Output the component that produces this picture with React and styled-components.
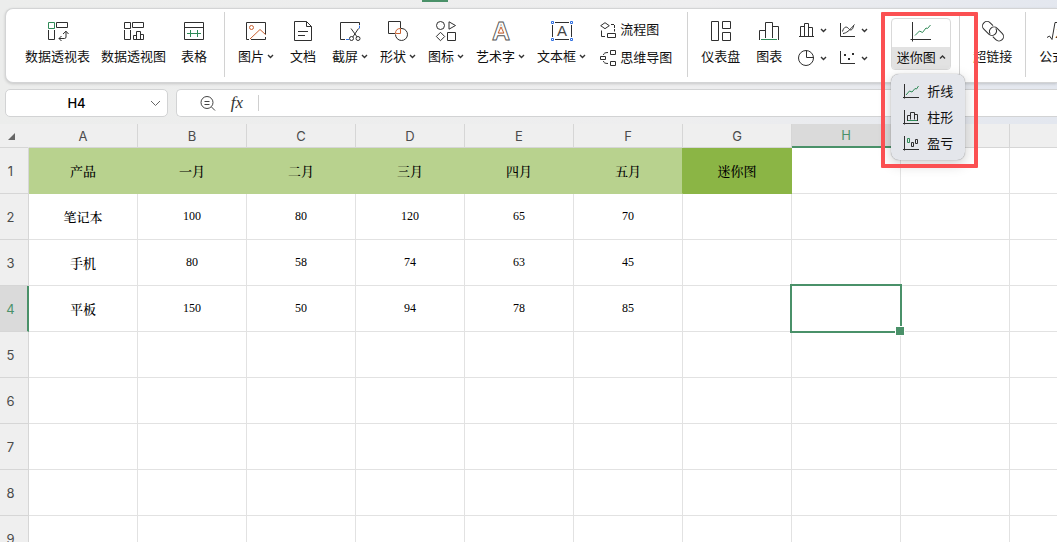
import React from "react";
import styled, { createGlobalStyle, css } from "styled-components";

const INK = "#2f2f2f";
const GREEN = "#4a9169";
const ICON_GREEN = "#2f8a57";
const ORANGE = "#c9602f";
const BLUE = "#2f6fe0";

const GlobalStyle = createGlobalStyle`
  * { box-sizing: border-box; }
  body {
    margin: 0;
    font-family: Inter, "Noto Sans CJK SC", sans-serif;
    font-size: 13px;
    color: #111;
    background: #eeefef;
  }
  button, input { font: inherit; color: inherit; }
`;

const Page = styled.div`
  display: flex;
  flex-direction: column;
  height: 100vh;
  overflow: hidden;
  background: linear-gradient(100deg, #ecedec 0%, #eeeeef 65%, #e3e7ef 100%) top / 100% 124px no-repeat, #efefef;
`;

const TabStrip = styled.div`
  height: 8px;
  flex: none;
  padding-left: 422px;
`;

const ActiveTab = styled.div`
  width: 26px;
  height: 2px;
  background: ${GREEN};
`;

const Ribbon = styled.header`
  position: relative;
  z-index: 2;
  display: flex;
  flex: none;
  margin-left: 5px;
  padding: 3px 0 5px 6px;
  background: #fff;
  border: 1px solid #d3d4d5;
  border-right: 0;
  border-radius: 8px 0 0 8px;
  box-shadow: 0 1px 3px rgba(0, 0, 0, 0.16);
`;

const Group = styled.div`
  display: flex;
  flex: none;
  align-items: flex-start;
  gap: ${(p) => p.$gap || 12}px;
  padding: 6px 13px 0;
  height: 65px;

  & + & { border-left: 1px solid #d2d2d2; }
`;

const Tool = styled.button`
  display: flex;
  flex-direction: column;
  align-items: center;
  gap: 6px;
  min-width: 34px;
  padding: 3px 0 0;
  border: 0;
  background: none;
`;

const Label = styled.span`
  display: flex;
  align-items: center;
  gap: 3px;
  height: 18px;
  line-height: 18px;
  white-space: nowrap;
  font-family: "Noto Sans CJK SC", sans-serif;
`;

const Stack = styled.div`
  display: flex;
  flex-direction: column;
  gap: 8px;
  padding: 2px ${(p) => p.$inset || 0}px 0;
`;

const InlineTool = styled.button`
  display: flex;
  align-items: center;
  gap: ${(p) => p.$gap || 4}px;
  height: 20px;
  padding: 0;
  border: 0;
  background: none;

  ${Label} {
    height: 20px;
    padding-bottom: 2px;
  }
`;

const SparkWrap = styled.div`
  position: relative;
  margin: 0 -5px 0 11px;
`;

const SparkButton = styled.button`
  display: flex;
  flex-direction: column;
  align-items: center;
  gap: 6px;
  width: 60px;
  padding: 2px 0 0;
  border: 1px solid #d9d9d9;
  border-radius: 4px;
  background: #fff;
  overflow: hidden;

  ${Label} {
    align-self: stretch;
    justify-content: center;
    height: 22px;
    padding-bottom: 3px;
    background: #e2e2e2;
  }
`;

const Menu = styled.div`
  position: absolute;
  z-index: 1;
  top: 56px;
  left: 0;
  width: 74px;
  padding: 4px 0;
  border-radius: 8px;
  background: #e4e6eb;
  box-shadow: 0 0 1px rgba(0, 0, 0, 0.5), 0 4px 14px rgba(0, 0, 0, 0.2);
`;

const MenuItem = styled.button`
  display: flex;
  align-items: center;
  gap: 8px;
  width: 100%;
  height: 26px;
  padding: 0 0 0 12px;
  border: 0;
  background: none;
`;

const Highlight = styled.div`
  position: absolute;
  z-index: 2;
  top: -6px;
  left: -10px;
  width: 97px;
  height: 156px;
  border: 4px solid #fb5052;
  border-radius: 1px;
  pointer-events: none;
`;

const FormulaRow = styled.div`
  display: flex;
  flex: none;
  gap: 8px;
  padding: 6px 0 7px 5px;
`;

const Field = styled.div`
  display: flex;
  align-items: center;
  height: 28px;
  border: 1px solid #d2d3d4;
  background: #fff;
`;

const NameBox = styled(Field)`
  width: 163px;
  border-radius: 5px;

  input {
    width: 141px;
    padding: 0;
    border: 0;
    background: none;
    text-align: center;
    font-weight: 500;
    color: #000;
  }
`;

const FormulaBar = styled(Field)`
  flex: 1;
  gap: 14px;
  padding-left: 23px;
  border-right: 0;
  border-radius: 5px 0 0 5px;

  input {
    flex: 1;
    height: 16px;
    padding: 0 8px;
    border: 0;
    border-left: 1px solid #cfcfcf;
    background: none;
  }
`;

const IconButton = styled.button`
  display: flex;
  padding: 0;
  border: 0;
  background: none;
`;

const FxButton = styled(IconButton)`
  width: 14px;
  justify-content: center;
  font: italic 17px/20px "Liberation Serif", serif;
  color: #333;
`;

const SheetArea = styled.main`
  flex: 1;
  min-height: 0;
  overflow: hidden;
  background: #fff;
`;

const Sheet = styled.table`
  table-layout: fixed;
  width: 1119px;
  border-collapse: separate;
  border-spacing: 0;

  th, td { padding: 0; text-align: center; font-weight: 400; }
`;

const Corner = styled.th`
  width: 29px;
  height: 24px;
  background: #efefef;
  border-right: 1px solid #efefef;
  border-bottom: 1px solid #d6d6d6;
`;

const SelectAll = styled(IconButton)`
  padding: 2px 0 0 8px;
`;

const headerActive = css`
  background: #dadada;
  color: ${GREEN};
`;

const ColHead = styled.th`
  width: 109px;
  color: #4b4b4b;
  background: #efefef;
  border-right: 1px solid #d6d6d6;
  border-bottom: 1px solid #d6d6d6;
  ${(p) => p.$active && headerActive}
  ${(p) => p.$active && `border-bottom: 2px solid ${GREEN};`}
`;

const RowHead = styled.th`
  height: 46px;
  color: #4b4b4b;
  background: #efefef;
  border-right: 1px solid #d6d6d6;
  border-bottom: 1px solid #d6d6d6;

  span { display: block; width: 21px; }
  ${(p) => p.$active && headerActive}
  ${(p) => p.$active && `border-right: 2px solid ${GREEN};`}
`;

const fills = { light: "#b8d28e", dark: "#8bb545" };

const Cell = styled.td`
  position: relative;
  color: #000;
  font-family: "Liberation Serif", "Noto Serif CJK SC", "Noto Sans CJK SC", serif;
  font-size: ${(p) => (p.$numeric ? 12 : 13)}px;
  background: ${(p) => fills[p.$fill] || "#fff"};
  border-right: 1px solid ${(p) => fills[p.$edge] || fills[p.$fill] || "#e2e2e2"};
  border-bottom: 1px solid ${(p) => fills[p.$fill] || "#e2e2e2"};
  && { font-weight: 500; }
`;

const Selection = styled.div`
  position: absolute;
  z-index: 1;
  inset: -2px;
  border: 2px solid ${GREEN};

  &::after {
    content: "";
    position: absolute;
    right: -5px;
    bottom: -5px;
    width: 8px;
    height: 8px;
    border: 1px solid #fff;
    background: ${GREEN};
  }
`;

function Svg({ w = 20, h = 20, children }) {
  return (
    <svg width={w} height={h} viewBox={`0 0 ${w} ${h}`} fill="none" stroke={INK} overflow="visible" aria-hidden="true">
      {children}
    </svg>
  );
}

const Caret = ({ up }) => (
  <svg width="7" height="6" viewBox="0 0 7 6" fill="none" stroke="#333" strokeWidth="1.4" aria-hidden="true">
    <path d={up ? "M1 4.5 3.5 2 6 4.5" : "M1 2 3.5 4.5 6 2"} />
  </svg>
);

const PivotTableIcon = () => (
  <Svg>
    <path stroke={ICON_GREEN} d="M.5 1.5h6v6h-6z" />
    <path d="M8.5 1.5h11v5h-11zM.5 9V18.5h6V9M11 17.500h5.500q1.500 0 1.500-1.500v-5.500M13.500 15 11 17.500l2.500 2.500M15 13l3-2.800L20.500 13" />
  </Svg>
);
const PivotChartIcon = () => (
  <Svg>
    <path d="M.5 1.500h6v6h-6zM8.500 1.500h11v5h-11zM.5 9V18.500h6V9M9.500 18.500v-4h3v-4h4v3h3v5zM12.500 14v4.500M16.500 13v5.500" />
  </Svg>
);
const TableIcon = () => (
  <Svg>
    <path d="M.5 1.500h19v17h-19zM.5 6.500h19" />
    <path stroke={ICON_GREEN} d="M3 12.500h14M6.500 9v7M13.500 9v7" />
  </Svg>
);
const PictureIcon = () => (
  <Svg>
    <path d="M3 18.500H.5v-17h19v12M5 18.500h14.500v-2.500" />
    <circle cx="5.500" cy="6.500" r="2" stroke={ORANGE} />
    <path stroke={ORANGE} d="m4 18 10-9.500 5.500 5" />
  </Svg>
);
const DocumentIcon = () => (
  <Svg>
    <path d="M1.500.5h12l5 5v14h-17zM13.500.5v5h5M5 10.500h10M5 14.500h7" />
  </Svg>
);
const ScreenshotIcon = () => (
  <Svg>
    <path d="M5 18.500H.5v-17h19V4M11 7.500l6.200 8.500M18.500 7.500 12.800 16" />
    <circle cx="11.500" cy="17.500" r="2" />
    <circle cx="18" cy="17.500" r="2" />
    <path stroke={BLUE} d="M19.500 4.500v3M6 18.500h3" />
  </Svg>
);
const ShapesIcon = () => (
  <Svg w={21}>
    <path d="M7 12.500H.5V.5h12V7" />
    <path d="M12.500 7.500h1.500a6 6 0 1 1-6.500 6" />
    <path stroke={ORANGE} d="M12.500 7.500v5h-5q0-5 5-5z" />
  </Svg>
);
const IconsIcon = () => (
  <Svg>
    <circle cx="4.500" cy="4.500" r="4" />
    <path d="m13 .8 6.500 3.700-6.500 3.700zM4.500 11.300l4.200 4.200-4.200 4.200-4.200-4.200zM11.500 11.500h8v8h-8z" />
  </Svg>
);
const WordArtIcon = () => (
  <Svg>
    <text x="10" y="18.500" textAnchor="middle" fontFamily="Liberation Sans" fontWeight="700" fontSize="25" stroke="#555" strokeWidth="0.9">A</text>
    <path fill="#fff" stroke="#fff" strokeWidth="2" d="m10 6 2.300 5.500H7.700z" />
    <path stroke={ORANGE} d="m10 6 2.800 6H7.200z" />
  </Svg>
);
const TextBoxIcon = () => (
  <Svg w={22}>
    <path d="M4 1.500h14M4 18.500h14M1.500 4v12M20.500 4v12" />
    <path stroke={BLUE} d="M.5.5h2v2h-2zM19.500.5h2v2h-2zM.5 17.500h2v2h-2zM19.500 17.500h2v2h-2z" />
    <text x="11" y="15" textAnchor="middle" fontFamily="Liberation Sans" fontSize="15" fill="#444" stroke="none">A</text>
  </Svg>
);
const FlowIcon = () => (
  <Svg w={16} h={16}>
    <path d="m5 .7 4.300 3L5 6.700l-4.300-3zM1.500 8.500v6H5M7.500 11.500h8v4h-8z" />
    <path strokeDasharray="3 1" d="M11 2.500h3.500v7" />
  </Svg>
);
const MindMapIcon = () => (
  <Svg w={16} h={16}>
    <path d="M.5 6.500h5v3h-5zM10.500.5h5v4h-5zM10.500 11.500h5v4h-5zM3.500 5q0-2.500 4.500-2.500M3.500 11q0 2.500 4.500 2.500" />
  </Svg>
);
const DashboardIcon = () => (
  <Svg>
    <path d="M.5.5h7v19h-7zM11.500.5h8v7h-8zM11.500 11.500h8v8h-8z" />
  </Svg>
);
const ChartIcon = () => (
  <Svg>
    <path d="M.5 19V9.500h6M6.500 17V1.500h7V17M13.500 5.500h6V19" />
    <path stroke={ICON_GREEN} d="M2 18.500h16" />
  </Svg>
);
const BarIcon = () => (
  <Svg w={16} h={16}>
    <path d="M1 14.500h15M2.500 14.500v-10h4M6.500 14.500v-13h4v13M10.500 5.500h4v9" />
  </Svg>
);
const PieIcon = () => (
  <Svg w={16} h={16}>
    <circle cx="8" cy="8" r="7.500" />
    <path d="M8.500.5v7h7" />
  </Svg>
);
const LineIcon = () => (
  <Svg w={16} h={16}>
    <path d="M1.500 1v13.500H16M4 11.500C7.500 11 10 9 15.500 2.500M3.500 9.500C5 4 8 4.500 9.500 6.500S13.500 9 14.500 4" />
  </Svg>
);
const ScatterIcon = () => (
  <Svg w={16} h={16}>
    <path d="M1.500 1v12.500H16" />
    <path fill={INK} stroke="none" d="M5 4h2v2H5zM13 3h2v2h-2zM9 8h2v2H9z" />
  </Svg>
);
const SparklineIcon = () => (
  <Svg>
    <path d="M1.500 1v19.500M-.5 18.500H20" />
    <path stroke={ICON_GREEN} d="m4 14.500 4.500-4.500 3 1.500L15 7l1.500.500L19.500 4" />
  </Svg>
);
const LineItemIcon = () => (
  <Svg w={16} h={16}>
    <path d="M1.500 1v14.500M0 14.500h16" />
    <path stroke={ICON_GREEN} d="m3 12 3.500-4L9 9l3-3.500 1.500.500L15.500 3" />
  </Svg>
);
const ColumnItemIcon = () => (
  <Svg w={16} h={16}>
    <path d="M1.500 1v14.500M0 14.500h16M4.500 12V6.500h3M7.500 10.500v-7h4v7M11.500 5.500h3V12" />
    <path stroke={ICON_GREEN} d="M5 11.500h9" />
  </Svg>
);
const WinLossItemIcon = () => (
  <Svg w={16} h={16}>
    <path d="M1.500 1v14.500M0 14.500h16M8.500 7.500h2v4h-2zM12.500 4.500h2v4h-2z" />
    <path stroke={ICON_GREEN} d="M4.500 3.500h2v4h-2z" />
  </Svg>
);
const LinkIcon = () => (
  <Svg w={22}>
    <rect x="-8" y="-4.500" width="16" height="9" rx="4.500" strokeDasharray="34 4" strokeDashoffset="-8" transform="translate(7.500 7.500) rotate(45)" />
    <rect x="-8" y="-4.500" width="16" height="9" rx="4.500" strokeDasharray="34 4" strokeDashoffset="-29" transform="translate(14.500 13) rotate(45)" />
  </Svg>
);
const FormulaIcon = () => (
  <Svg>
    <path d="M0 16.500 2.500 15 5 18.500 8 1.500h12" />
    <text x="9" y="17" fontFamily="Liberation Serif" fontStyle="italic" fontSize="18" fill={INK} stroke="none">x</text>
  </Svg>
);
const SearchIcon = () => (
  <Svg w={16} h={16}>
    <g stroke="#444">
      <circle cx="7" cy="7.500" r="6" />
      <path d="M4.500 6.500h5M4.500 9.500h5M11.500 12l3.500 3.500" />
    </g>
  </Svg>
);

function RibbonTool({ icon: Icon, label, menu }) {
  return (
    <Tool type="button">
      <Icon />
      <Label>{label}{menu && <Caret />}</Label>
    </Tool>
  );
}

function RowTool({ icon: Icon, label, name }) {
  return (
    <InlineTool type="button" aria-label={name} $gap={label ? 4 : 6}>
      <Icon />
      {label ? <Label>{label}</Label> : <Caret />}
    </InlineTool>
  );
}

function SparklineMenu() {
  return (
    <SparkWrap>
      <SparkButton type="button" aria-expanded="true">
        <SparklineIcon />
        <Label>迷你图<Caret up /></Label>
      </SparkButton>
      <Menu role="menu">
        <MenuItem role="menuitem"><LineItemIcon /><Label>折线</Label></MenuItem>
        <MenuItem role="menuitem"><ColumnItemIcon /><Label>柱形</Label></MenuItem>
        <MenuItem role="menuitem"><WinLossItemIcon /><Label>盈亏</Label></MenuItem>
      </Menu>
      <Highlight />
    </SparkWrap>
  );
}

const columns = ["A", "B", "C", "D", "E", "F", "G", "H", "I", "J"];
const data = [
  ["产品", "一月", "二月", "三月", "四月", "五月", "迷你图"],
  ["笔记本", 100, 80, 120, 65, 70],
  ["手机", 80, 58, 74, 63, 45],
  ["平板", 150, 50, 94, 78, 85],
];
const rows = [0, 1, 2, 3, 4, 5, 6, 7, 8];

function fillOf(r, c) {
  if (r !== 0 || c > 6) return undefined;
  return c === 6 ? "dark" : "light";
}

export default function App() {
  return (
    <Page>
      <GlobalStyle />
      <TabStrip><ActiveTab /></TabStrip>
      <Ribbon>
        <Group $gap={11}>
          <RibbonTool icon={PivotTableIcon} label="数据透视表" />
          <RibbonTool icon={PivotChartIcon} label="数据透视图" />
          <RibbonTool icon={TableIcon} label="表格" />
        </Group>
        <Group>
          <RibbonTool icon={PictureIcon} label="图片" menu />
          <RibbonTool icon={DocumentIcon} label="文档" />
          <RibbonTool icon={ScreenshotIcon} label="截屏" menu />
          <RibbonTool icon={ShapesIcon} label="形状" menu />
          <RibbonTool icon={IconsIcon} label="图标" menu />
          <RibbonTool icon={WordArtIcon} label="艺术字" menu />
          <RibbonTool icon={TextBoxIcon} label="文本框" menu />
          <Stack $inset={2}>
            <RowTool icon={FlowIcon} label="流程图" />
            <RowTool icon={MindMapIcon} label="思维导图" />
          </Stack>
        </Group>
        <Group>
          <RibbonTool icon={DashboardIcon} label="仪表盘" />
          <RibbonTool icon={ChartIcon} label="图表" />
          <Stack>
            <RowTool icon={BarIcon} name="柱形图" />
            <RowTool icon={PieIcon} name="饼图" />
          </Stack>
          <Stack>
            <RowTool icon={LineIcon} name="折线图" />
            <RowTool icon={ScatterIcon} name="散点图" />
          </Stack>
          <SparklineMenu />
        </Group>
        <Group>
          <RibbonTool icon={LinkIcon} label="超链接" />
        </Group>
        <Group>
          <RibbonTool icon={FormulaIcon} label="公式" menu />
        </Group>
      </Ribbon>

      <FormulaRow>
        <NameBox>
          <input aria-label="名称框" defaultValue="H4" />
          <IconButton type="button" aria-label="展开名称列表">
            <svg width="16" height="10" viewBox="0 0 16 10" fill="none" stroke="#666" aria-hidden="true">
              <path d="m4 3 4.500 4.500L13 3" />
            </svg>
          </IconButton>
        </NameBox>
        <FormulaBar>
          <IconButton type="button" aria-label="查找"><SearchIcon /></IconButton>
          <FxButton type="button">fx</FxButton>
          <input aria-label="编辑栏" />
        </FormulaBar>
      </FormulaRow>

      <SheetArea>
        <Sheet>
          <thead>
            <tr>
              <Corner>
                <SelectAll type="button" aria-label="全选">
                  <svg width="8" height="8" viewBox="0 0 8 8" fill="#666" aria-hidden="true">
                    <path d="M7 0v7H0z" />
                  </svg>
                </SelectAll>
              </Corner>
              {columns.map((c) => (
                <ColHead key={c} scope="col" $active={c === "H"}>{c}</ColHead>
              ))}
            </tr>
          </thead>
          <tbody>
            {rows.map((r) => (
              <tr key={r}>
                <RowHead scope="row" $active={r === 3}><span>{r + 1}</span></RowHead>
                {columns.map((c, i) => (
                  <Cell
                    key={c}
                    $fill={fillOf(r, i)}
                    $edge={r === 0 && i === 5 ? "dark" : undefined}
                    $numeric={typeof data[r]?.[i] === "number"}
                  >
                    {data[r]?.[i]}
                    {r === 3 && c === "H" && <Selection />}
                  </Cell>
                ))}
              </tr>
            ))}
          </tbody>
        </Sheet>
      </SheetArea>
    </Page>
  );
}
